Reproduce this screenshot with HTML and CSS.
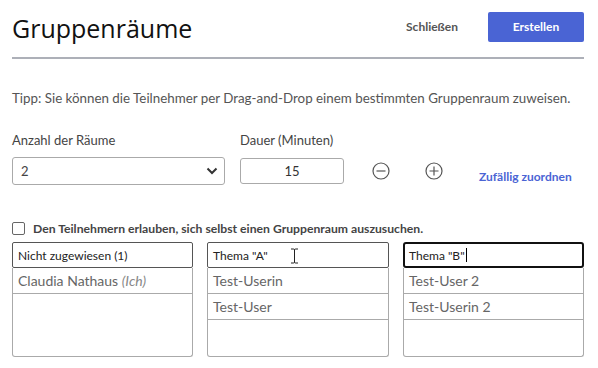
FILE: index.html
```html
<!DOCTYPE html>
<html lang="de">
<head>
    <meta charset="UTF-8">
    <title>Gruppenräume</title>
    <link rel="stylesheet" href="styles.css">
</head>
<body>
    <header class="top">
        <h1>Gruppenräume</h1>
        <div class="actions">
            <button class="btn-link">Schließen</button>
            <button class="btn-primary">Erstellen</button>
        </div>
    </header>

    <p class="tip">Tipp: Sie können die Teilnehmer per Drag-and-Drop einem bestimmten Gruppenraum zuweisen.</p>

    <section class="settings">
        <div class="field field-rooms">
            <label>Anzahl der Räume</label>
            <div class="select">
                <span>2</span>
                <svg width="12" height="8" viewBox="0 0 12 8"><path d="M1.5 1.5 L6 6 L10.5 1.5" fill="none" stroke="#333" stroke-width="2"/></svg>
            </div>
        </div>
        <div class="field field-duration">
            <label>Dauer (Minuten)</label>
            <div class="duration-row">
                <div class="number">15</div>
                <button class="round-btn">
                    <svg width="18" height="18" viewBox="0 0 18 18"><circle cx="9" cy="9" r="8" fill="none" stroke="#555" stroke-width="1.2"/><path d="M4.5 9 H13.5" stroke="#555" stroke-width="1.2"/></svg>
                </button>
                <button class="round-btn">
                    <svg width="18" height="18" viewBox="0 0 18 18"><circle cx="9" cy="9" r="8" fill="none" stroke="#555" stroke-width="1.2"/><path d="M4.5 9 H13.5 M9 4.5 V13.5" stroke="#555" stroke-width="1.2"/></svg>
                </button>
                <a href="#" class="random">Zufällig zuordnen</a>
            </div>
        </div>
    </section>

    <label class="check">
        <span class="box"></span>
        Den Teilnehmern erlauben, sich selbst einen Gruppenraum auszusuchen.
    </label>

    <section class="rooms">
        <div class="room">
            <div class="room-name">Nicht zugewiesen (1)</div>
            <ul class="room-list">
                <li>Claudia Nathaus <em>(Ich)</em></li>
            </ul>
        </div>
        <div class="room">
            <div class="room-name">Thema "A"
                <svg class="ibeam" width="9" height="16" viewBox="0 0 9 16"><path d="M1 1 H3.5 Q4.5 1 4.5 2 V14 Q4.5 15 3.5 15 H1 M8 1 H5.5 Q4.5 1 4.5 2 M4.5 14 Q4.5 15 5.5 15 H8" fill="none" stroke="#222" stroke-width="1"/></svg>
            </div>
            <ul class="room-list">
                <li>Test-Userin</li>
                <li>Test-User</li>
            </ul>
        </div>
        <div class="room">
            <div class="room-name focused">Thema "B"<span class="caret"></span></div>
            <ul class="room-list">
                <li>Test-User 2</li>
                <li>Test-Userin 2</li>
            </ul>
        </div>
    </section>
</body>
</html>
```

FILE: styles.css
```css
body {
    margin: 0;
    padding: 0 14px 0 12px;
    font-family: 'Lato', 'Liberation Sans', sans-serif;
    color: #444;
    background: #fff;
}

.top {
    display: flex;
    align-items: center;
    justify-content: space-between;
    height: 57px;
    border-bottom: 2px solid #adb0b8;
}

.top h1 {
    margin: 0;
    font-family: 'Open Sans', sans-serif;
    font-weight: 400;
    font-size: 25px;
    color: #111;
    padding-bottom: 2px;
}

.actions {
    display: flex;
    align-items: center;
    gap: 30px;
    margin-top: -4px;
}

.btn-link {
    border: none;
    background: none;
    font-family: inherit;
    font-weight: 700;
    font-size: 12px;
    color: #555;
    padding: 0;
}

.btn-primary {
    height: 30px;
    width: 96px;
    border: none;
    border-radius: 2px;
    background: #4a64d4;
    color: #fff;
    font-family: inherit;
    font-weight: 700;
    font-size: 12px;
}

.tip {
    margin: 31px 0 0;
    font-size: 13.35px;
    color: #555;
}

.settings {
    display: flex;
    gap: 15px;
    margin-top: 26px;
}

.field label {
    display: block;
    font-size: 13px;
    color: #444;
    margin-bottom: 9px;
}

.select {
    width: 205px;
    height: 26px;
    border: 1px solid #aaa;
    border-radius: 3px;
    display: flex;
    align-items: center;
    justify-content: space-between;
    padding-right: 6px;
    font-size: 13px;
}

.select span {
    padding-left: 8px;
}

.duration-row {
    display: flex;
    align-items: center;
    margin-top: 4px;
}

.number {
    width: 102px;
    height: 24px;
    border: 1px solid #aaa;
    border-radius: 3px;
    display: flex;
    align-items: center;
    justify-content: center;
    font-size: 13px;
    color: #333;
}

.round-btn {
    border: none;
    background: none;
    padding: 0;
    margin-left: 28px;
    display: flex;
}

.round-btn + .round-btn {
    margin-left: 35px;
}

.random {
    margin-left: 36px;
    margin-top: 12px;
    font-size: 12px;
    font-weight: 700;
    color: #4a64d4;
    text-decoration: none;
}

.check {
    display: flex;
    align-items: center;
    gap: 8px;
    margin-top: 36px;
    font-size: 12.2px;
    font-weight: 700;
    color: #444;
}

.check .box {
    width: 11px;
    height: 11px;
    border: 1px solid #666;
    border-radius: 2px;
}

.rooms {
    display: grid;
    grid-template-columns: 181px 182px 181px;
    gap: 14px;
    margin-top: 6px;
}

.room-name {
    position: relative;
    height: 24px;
    border: 1px solid #555;
    border-radius: 2px;
    display: flex;
    align-items: center;
    padding-left: 5px;
    font-size: 12px;
    color: #222;
}

.room-name.focused {
    border: 2px solid #111;
    border-radius: 3px;
    height: 22px;
    padding-left: 4px;
}

.caret {
    display: inline-block;
    width: 1px;
    height: 14px;
    background: #000;
    margin-left: 1px;
}

.ibeam {
    position: absolute;
    left: 82px;
    top: 5px;
}

.room-list {
    list-style: none;
    margin: 0;
    padding: 0;
    height: 88px;
    border: 1px solid #aaa;
    border-top: none;
    border-radius: 0 0 3px 3px;
}

.room-list li {
    height: 25px;
    line-height: 25px;
    border-bottom: 1px solid #aaa;
    padding-left: 5px;
    font-size: 14px;
    color: #666;
}

.room-list em {
    color: #888;
}
```
